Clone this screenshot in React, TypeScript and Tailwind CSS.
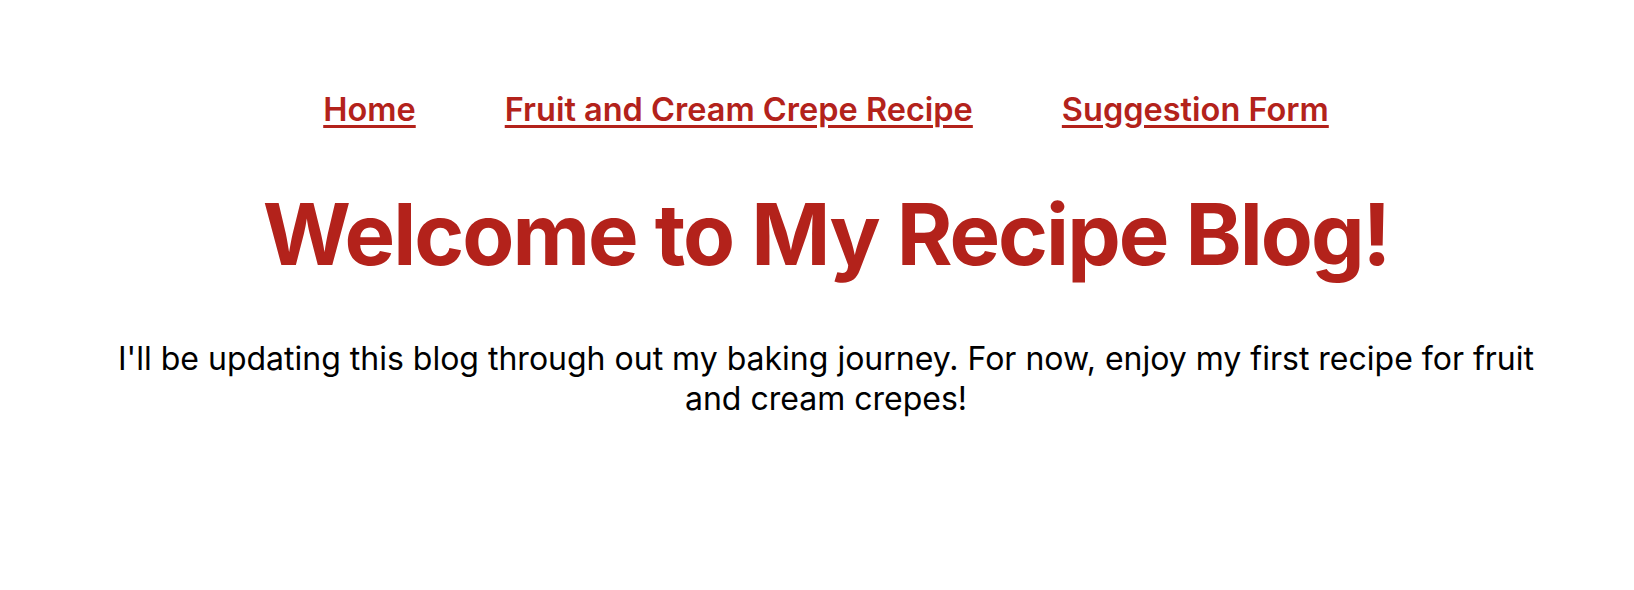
export default function App() {
  const links = ["Home", "Fruit and Cream Crepe Recipe", "Suggestion Form"];

  return (
    <div className="min-h-[590px] bg-white pl-[18px] font-['Inter',sans-serif]">
      <nav className="flex justify-center gap-[89px] pt-[88px]">
        {links.map((link) => (
          <a
            key={link}
            href="#"
            className="text-[32.5px] leading-[44px] font-semibold text-[#b3221b] underline underline-offset-4 decoration-[3px]"
          >
            {link}
          </a>
        ))}
      </nav>

      <h1 className="mt-[48px] text-center text-[85px] leading-[110px] font-bold tracking-[-2px] text-[#b3221b]">
        Welcome to My Recipe Blog!
      </h1>

      <p className="mx-auto mt-[49px] max-w-[1442px] text-center text-[32px] leading-[40px] text-black">
        I'll be updating this blog through out my baking journey. For now, enjoy my first recipe for fruit
        and cream crepes!
      </p>
    </div>
  );
}
